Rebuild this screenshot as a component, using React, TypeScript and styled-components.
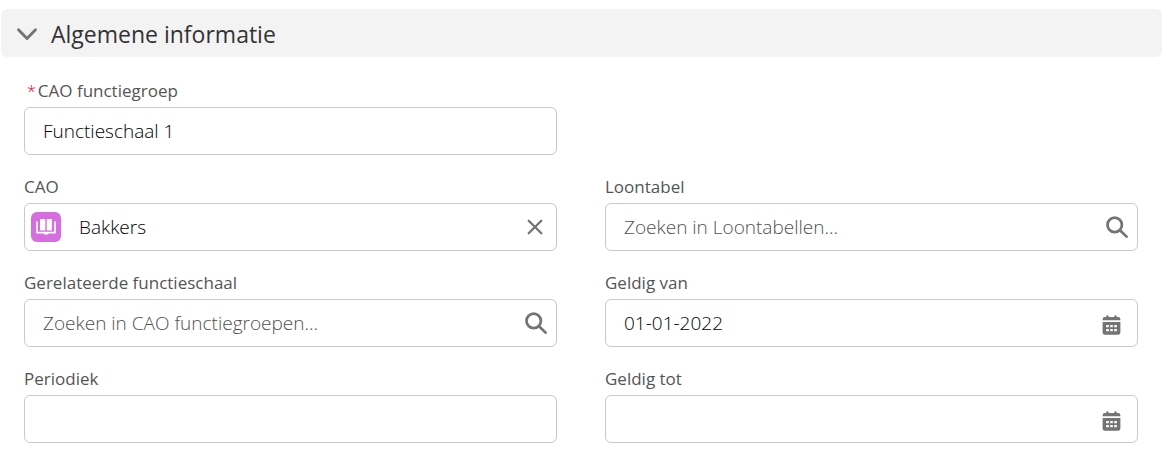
import React, { useState } from "react";
import styled, { createGlobalStyle } from "styled-components";

const GlobalStyle = createGlobalStyle`
  *, *::before, *::after { box-sizing: border-box; }
  body {
    margin: 0;
    background: #fff;
    color: #1c1c1c;
    font-family: "Segoe UI", "Open Sans", "Noto Sans", sans-serif;
  }
`;

const Page = styled.main`
  padding: 9px 8px 18px 1px;
`;

const SectionTitle = styled.h3`
  margin: 0;
  font-weight: 400;
`;

const SectionToggle = styled.button`
  display: flex;
  align-items: center;
  gap: 13px;
  width: 100%;
  height: 48px;
  padding: 2px 15px 0;
  border: 0;
  border-radius: 6px;
  background: #f3f3f3;
  color: #333;
  font: inherit;
  font-size: 23px;
  line-height: 32px;
  text-align: left;
  cursor: pointer;
`;

const Grid = styled.div`
  display: grid;
  grid-template-columns: 1fr 1fr;
  gap: 20px 48px;
  padding: 22px 24px 0 23px;
`;

const Field = styled.div<{ $startsRow?: boolean }>`
  display: flex;
  flex-direction: column;
  gap: 4px;
  min-width: 0;
  grid-column: ${(p) => (p.$startsRow ? "1" : "auto")};
`;

const Label = styled.label<{ $required?: boolean }>`
  padding-left: ${(p) => (p.$required ? "3px" : "0")};
  color: #555;
  font-size: 17px;
  line-height: 24px;
`;

const Asterisk = styled.abbr`
  margin-right: 2px;
  color: #ea001e;
  font-size: 16px;
  font-weight: 300;
  text-decoration: none;
`;

const Control = styled.div<{ $end: number; $start: number }>`
  display: flex;
  align-items: center;
  height: 48px;
  padding: 0 ${(p) => p.$end}px 0 ${(p) => p.$start}px;
  border: 1px solid #c9c9c9;
  border-radius: 6px;
  background: #fff;
  color: #747474;

  &:focus-within {
    border-color: #0176d3;
  }
`;

const Input = styled.input`
  flex: 1;
  min-width: 0;
  height: 100%;
  padding: 0;
  border: 0;
  outline: 0;
  background: transparent;
  color: #000;
  font: inherit;
  font-size: 19px;
  font-weight: 300;

  &::placeholder {
    color: #505050;
    opacity: 1;
  }
`;

const RecordIcon = styled.span`
  display: flex;
  margin-right: 18px;
`;

const IconButton = styled.button<{ $low?: boolean }>`
  display: flex;
  padding: ${(p) => (p.$low ? "4px 0 0" : "0")};
  border: 0;
  background: transparent;
  color: inherit;
  cursor: pointer;
`;

const ChevronIcon = () => (
  <svg width="22" height="14" viewBox="0 0 22 14" fill="none" aria-hidden="true">
    <path d="M2.500 2.700 11 11.400l8.500-8.700" stroke="#747474" strokeWidth="2.900" strokeLinecap="round" strokeLinejoin="round" />
  </svg>
);

const SearchIcon = () => (
  <svg width="22" height="22" viewBox="0 0 22 22" fill="none" stroke="currentColor" aria-hidden="true">
    <circle cx="8.700" cy="8.900" r="7.200" strokeWidth="2.700" />
    <path d="M14 14.200l6.600 6.400" strokeWidth="2.700" strokeLinecap="round" />
  </svg>
);

const CloseIcon = () => (
  <svg width="16" height="16" viewBox="0 0 16 16" fill="none" aria-hidden="true">
    <path d="M1.700 1.700l12.600 12.600M14.300 1.700 1.700 14.300" stroke="currentColor" strokeWidth="2.300" strokeLinecap="round" />
  </svg>
);

const CalendarIcon = () => (
  <svg width="19" height="20" viewBox="0 0 19 20" fill="currentColor" aria-hidden="true">
    <path d="M4.200 1.500a1.200 1.200 0 0 1 2.400 0V2h5.800v-.5a1.200 1.200 0 0 1 2.400 0V2h1.400A2.200 2.200 0 0 1 18.400 4.200v1.100H.6V4.200A2.200 2.200 0 0 1 2.800 2H4.200z" />
    <path
      fillRule="evenodd"
      d="M.6 7h17.800v10.500a2.200 2.200 0 0 1-2.200 2.200H2.800a2.200 2.200 0 0 1-2.200-2.200zM4.200 10v2.200h2.600V10zm4 0v2.200h2.600V10zm4 0v2.200h2.600V10zm-8 4v2.200h2.600V14zm4 0v2.200h2.600V14zm4 0v2.200h2.600V14z"
    />
  </svg>
);

const BookIcon = () => (
  <svg width="30" height="30" viewBox="0 0 30 30" aria-hidden="true">
    <rect width="30" height="30" rx="6" fill="#d66ee0" />
    <rect x="9" y="7" width="5.300" height="11.500" rx=".8" fill="#fff" />
    <rect x="15.700" y="7" width="5.300" height="11.500" rx=".8" fill="#fff" />
    <path d="M6 10v10.600h18V10" fill="none" stroke="#fff" strokeWidth="1.700" strokeLinecap="round" strokeLinejoin="round" />
    <path d="M12.800 20h4.400v1.600a1 1 0 0 1-1 1h-2.400a1 1 0 0 1-1-1z" fill="#fff" />
  </svg>
);

type FieldProps = {
  id: string;
  label: string;
  value?: string;
  placeholder?: string;
  required?: boolean;
  startsRow?: boolean;
  kind?: "text" | "lookup" | "record" | "date";
};

const endPadding = { text: 18, lookup: 9, record: 13, date: 16 };

function FormField({ id, label, value = "", placeholder, required, startsRow, kind = "text" }: FieldProps) {
  const [text, setText] = useState(value);
  return (
    <Field $startsRow={startsRow}>
      <Label htmlFor={id} $required={required}>
        {required && <Asterisk title="verplicht">*</Asterisk>}
        {label}
      </Label>
      <Control $start={kind === "record" ? 6 : 18} $end={endPadding[kind]}>
        {kind === "record" && <RecordIcon><BookIcon /></RecordIcon>}
        <Input id={id} value={text} placeholder={placeholder} required={required} onChange={(e) => setText(e.target.value)} />
        {kind === "lookup" && <SearchIcon />}
        {kind === "record" && (
          <IconButton type="button" aria-label="Selectie wissen" onClick={() => setText("")}>
            <CloseIcon />
          </IconButton>
        )}
        {kind === "date" && (
          <IconButton type="button" aria-label="Datum kiezen" $low>
            <CalendarIcon />
          </IconButton>
        )}
      </Control>
    </Field>
  );
}

export default function App() {
  const [open, setOpen] = useState(true);
  return (
    <Page>
      <GlobalStyle />
      <SectionTitle>
        <SectionToggle type="button" aria-expanded={open} onClick={() => setOpen(!open)}>
          <ChevronIcon />
          Algemene informatie
        </SectionToggle>
      </SectionTitle>
      {open && (
        <Grid>
          <FormField id="functiegroep" label="CAO functiegroep" value="Functieschaal 1" required />
          <FormField id="cao" label="CAO" value="Bakkers" kind="record" startsRow />
          <FormField id="loontabel" label="Loontabel" placeholder="Zoeken in Loontabellen..." kind="lookup" />
          <FormField id="gerelateerd" label="Gerelateerde functieschaal" placeholder="Zoeken in CAO functiegroepen..." kind="lookup" />
          <FormField id="geldig-van" label="Geldig van" value="01-01-2022" kind="date" />
          <FormField id="periodiek" label="Periodiek" />
          <FormField id="geldig-tot" label="Geldig tot" kind="date" />
        </Grid>
      )}
    </Page>
  );
}
